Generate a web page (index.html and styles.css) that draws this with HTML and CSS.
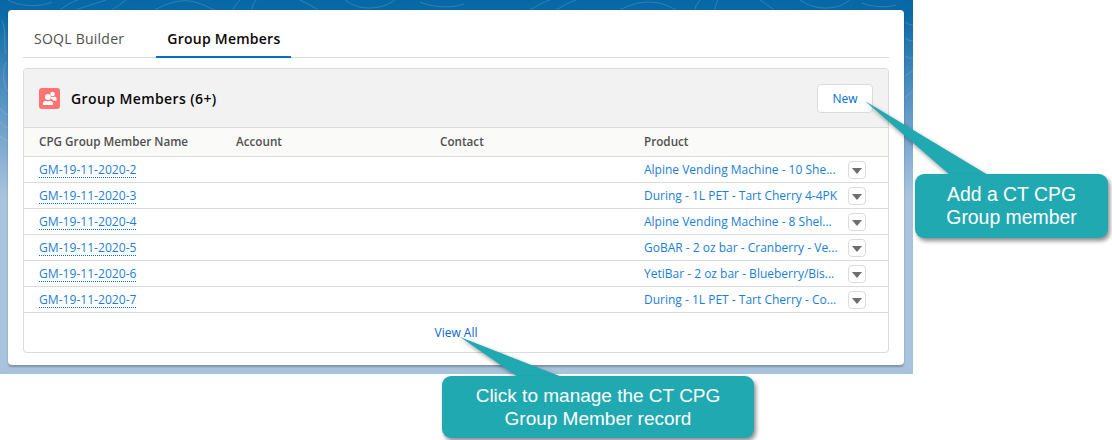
FILE: index.html
```html
<!DOCTYPE html>
<html lang="en">
<head>
    <meta charset="UTF-8">
    <title>Group Members</title>
    <link rel="stylesheet" href="styles.css">
</head>
<body>
    <div class="backdrop">
        <svg class="topo" width="913" height="374" viewBox="0 0 913 374" fill="none" stroke="#ffffff" stroke-opacity="0.16">
            <path d="M8 0c10 6 30 8 44 2M60 10c8-6 12-8 18-10M76 10c10-4 24-8 30-10M112 10c6-4 10-7 14-10M155 10c10-6 25-12 40-8 8 2 14 6 20 8"/>
            <path d="M240 0c-4 4-6 7-7 10M256 0c-3 4-4 7-4 10M300 0c8 4 14 7 18 10M345 0c6 4 12 8 24 8s20-4 26-8M420 2c12 5 30 7 44 2"/>
            <path d="M530 10c8-5 14-8 20-10M556 10c8-5 14-8 20-10M620 10c14-8 32-11 48-4l8 4M700 0c-3 4-5 7-5 10M718 0c-2 4-3 7-3 10"/>
            <path d="M760 0c6 4 10 7 14 10M800 0c8 5 14 8 26 8s18-4 24-8M862 3c10 4 24 5 34 2"/>
            <path d="M2 20c5 14 1 24 4 34M6 62c-4 10-3 22 2 30M0 108c3 4 5 6 8 7M0 122c3 3 5 5 8 6M0 136c3 2 5 4 8 5"/>
            <path d="M905 22c3 2 5 3 8 3M905 38c3 2 5 3 8 3M905 56c3 1 5 3 8 2M905 76c3-2 5-4 8-5M905 98c3-3 5-5 8-7"/>
        </svg>
        <main class="card">
            <nav class="tabs">
                <a class="tab">SOQL Builder</a>
                <a class="tab tab-active">Group Members</a>
            </nav>
            <section class="panel">
                <header class="panel-head">
                    <span class="panel-icon">
                        <svg width="21" height="21" viewBox="0 0 21 21" fill="#fff">
                            <circle cx="13.500" cy="6" r="2.300"/>
                            <path d="M11.500 8.500c1.200.8 2.800.8 4 0 1 .4 2 1 2 2v2.200h-3.200c-.4-1-1.300-1.600-2.300-2-.1-.8 0-1.500-.5-2.200z"/>
                            <circle cx="9" cy="9" r="2.900"/>
                            <path d="M4 17v-1.800c0-1.200 1.300-1.900 2.700-2.400 1.400.8 3.200.8 4.600 0 1.400.5 2.700 1.200 2.700 2.400V17z"/>
                        </svg>
                    </span>
                    <h2 class="panel-title">Group Members (6+)</h2>
                    <button class="btn-new">New</button>
                </header>
                <div class="row row-head">
                    <span>CPG Group Member Name</span>
                    <span>Account</span>
                    <span>Contact</span>
                    <span>Product</span>
                </div>
                <div class="row">
                    <a class="name-link">GM-19-11-2020-2</a><span></span><span></span>
                    <a class="product">Alpine Vending Machine - 10 She...</a>
                    <button class="menu-btn"></button>
                </div>
                <div class="row">
                    <a class="name-link">GM-19-11-2020-3</a><span></span><span></span>
                    <a class="product">During - 1L PET - Tart Cherry 4-4PK</a>
                    <button class="menu-btn"></button>
                </div>
                <div class="row">
                    <a class="name-link">GM-19-11-2020-4</a><span></span><span></span>
                    <a class="product">Alpine Vending Machine - 8 Shel...</a>
                    <button class="menu-btn"></button>
                </div>
                <div class="row">
                    <a class="name-link">GM-19-11-2020-5</a><span></span><span></span>
                    <a class="product">GoBAR - 2 oz bar - Cranberry - Ve...</a>
                    <button class="menu-btn"></button>
                </div>
                <div class="row">
                    <a class="name-link">GM-19-11-2020-6</a><span></span><span></span>
                    <a class="product">YetiBar - 2 oz bar - Blueberry/Bis...</a>
                    <button class="menu-btn"></button>
                </div>
                <div class="row">
                    <a class="name-link">GM-19-11-2020-7</a><span></span><span></span>
                    <a class="product">During - 1L PET - Tart Cherry - Co...</a>
                    <button class="menu-btn"></button>
                </div>
                <footer class="panel-foot"><a>View All</a></footer>
            </section>
        </main>
    </div>

    <svg class="pointer pointer-new" width="130" height="80" viewBox="0 0 130 80">
        <path d="M3 2 L126 76 L88 76 Z" fill="#21a9b2"/>
    </svg>
    <div class="callout callout-new">Add a CT CPG<br>Group member</div>

    <svg class="pointer pointer-view" width="120" height="50" viewBox="0 0 120 50">
        <path d="M1 1 L103 41 L59 41 Z" fill="#21a9b2"/>
    </svg>
    <div class="callout callout-view">Click to manage the CT CPG<br>Group Member record</div>
</body>
</html>
```

FILE: styles.css
```css
body {
    margin: 0;
    width: 1112px;
    height: 440px;
    overflow: hidden;
    background: #fff;
    font-family: "Open Sans", sans-serif;
    font-size: 12px;
    color: #3e3e3c;
    position: relative;
}

.backdrop {
    width: 913px;
    height: 374px;
    box-sizing: border-box;
    padding: 10px 9px 0 8px;
    background: linear-gradient(#0868a6 0, #0a69a6 14px, #4d8fc0 90px, #a9c3df 195px);
    position: relative;
}

.topo {
    position: absolute;
    left: 0;
    top: 0;
}

.card {
    position: relative;
    height: 355px;
    box-sizing: border-box;
    padding: 11px 15px 0;
    background: #fff;
    border-radius: 4px;
    box-shadow: 0 2px 2px rgba(0, 0, 0, 0.25);
}

.tabs {
    display: flex;
    height: 36px;
    border-bottom: 1px solid #dddbda;
}

.tab {
    box-sizing: border-box;
    height: 37px;
    padding: 8px 11px 0;
    font-size: 14px;
    letter-spacing: 0.25px;
    color: #514f4d;
}

.tab:first-child {
    margin-right: 21px;
}

.tab-active {
    color: #080707;
    font-weight: 600;
    letter-spacing: 0.25px;
    border-bottom: 2px solid #0070d2;
}

.panel {
    margin-top: 10px;
    height: 285px;
    box-sizing: border-box;
    border: 1px solid #dddbda;
    border-radius: 4px;
    overflow: hidden;
}

.panel-head {
    display: flex;
    align-items: center;
    height: 58px;
    box-sizing: border-box;
    padding: 0 15px;
    background: #f3f2f2;
}

.panel-icon {
    display: flex;
    width: 21px;
    height: 21px;
    border-radius: 3px;
    background: #fc7373;
}

.panel-title {
    flex: 1;
    margin: 0 0 0 11px;
    font-size: 14px;
    font-weight: 600;
    letter-spacing: 0.4px;
    color: #080707;
}

.btn-new {
    width: 56px;
    height: 29px;
    margin-top: 1px;
    padding: 0;
    border: 1px solid #dddbda;
    border-radius: 4px;
    background: #fff;
    color: #0070d2;
    font: 12px "Open Sans", sans-serif;
}

.row {
    display: grid;
    grid-template-columns: 197px 204px 204px 204px 18px;
    align-items: center;
    height: 26px;
    box-sizing: border-box;
    padding-left: 15px;
    border-top: 1px solid #dddbda;
}

.row-head {
    height: 29px;
    padding-bottom: 2px;
    background: #fafaf9;
    font-weight: 600;
    color: #514f4d;
    font-size: 11.700px;
}

.name-link {
    justify-self: start;
    color: #1b7ed6;
    font-size: 12.100px;
    border-bottom: 1px dotted #0070d2;
    line-height: 15px;
}

.product {
    color: #1b7ed6;
    white-space: nowrap;
}

.menu-btn {
    position: relative;
    width: 18px;
    height: 18px;
    margin-top: 1px;
    padding: 0;
    border: 1px solid #dddbda;
    border-radius: 4px;
    background: #fff;
}

.menu-btn::after {
    content: "";
    position: absolute;
    left: 3px;
    top: 6px;
    border-left: 5px solid transparent;
    border-right: 5px solid transparent;
    border-top: 6px solid #706e6b;
}

.panel-foot {
    height: 40px;
    box-sizing: border-box;
    padding-top: 11px;
    border-top: 1px solid #dddbda;
    text-align: center;
    color: #0a68c8;
}

.callout {
    position: absolute;
    box-sizing: border-box;
    display: flex;
    align-items: center;
    justify-content: center;
    text-align: center;
    background: #21a9b2;
    border-radius: 9px;
    box-shadow: 2px 3px 4px rgba(0, 0, 0, 0.45);
    color: #fff;
    font-family: "Liberation Sans", sans-serif;
    line-height: 23px;
}

.callout-new {
    left: 915px;
    top: 174px;
    width: 193px;
    height: 64px;
    font-size: 19.400px;
}

.callout-view {
    left: 442px;
    top: 376px;
    width: 312px;
    height: 62px;
    font-size: 19px;
}

.pointer {
    position: absolute;
    filter: drop-shadow(1px 2px 2px rgba(0, 0, 0, 0.4));
}

.pointer-new {
    left: 862px;
    top: 99px;
}

.pointer-view {
    left: 459px;
    top: 336px;
}
```
